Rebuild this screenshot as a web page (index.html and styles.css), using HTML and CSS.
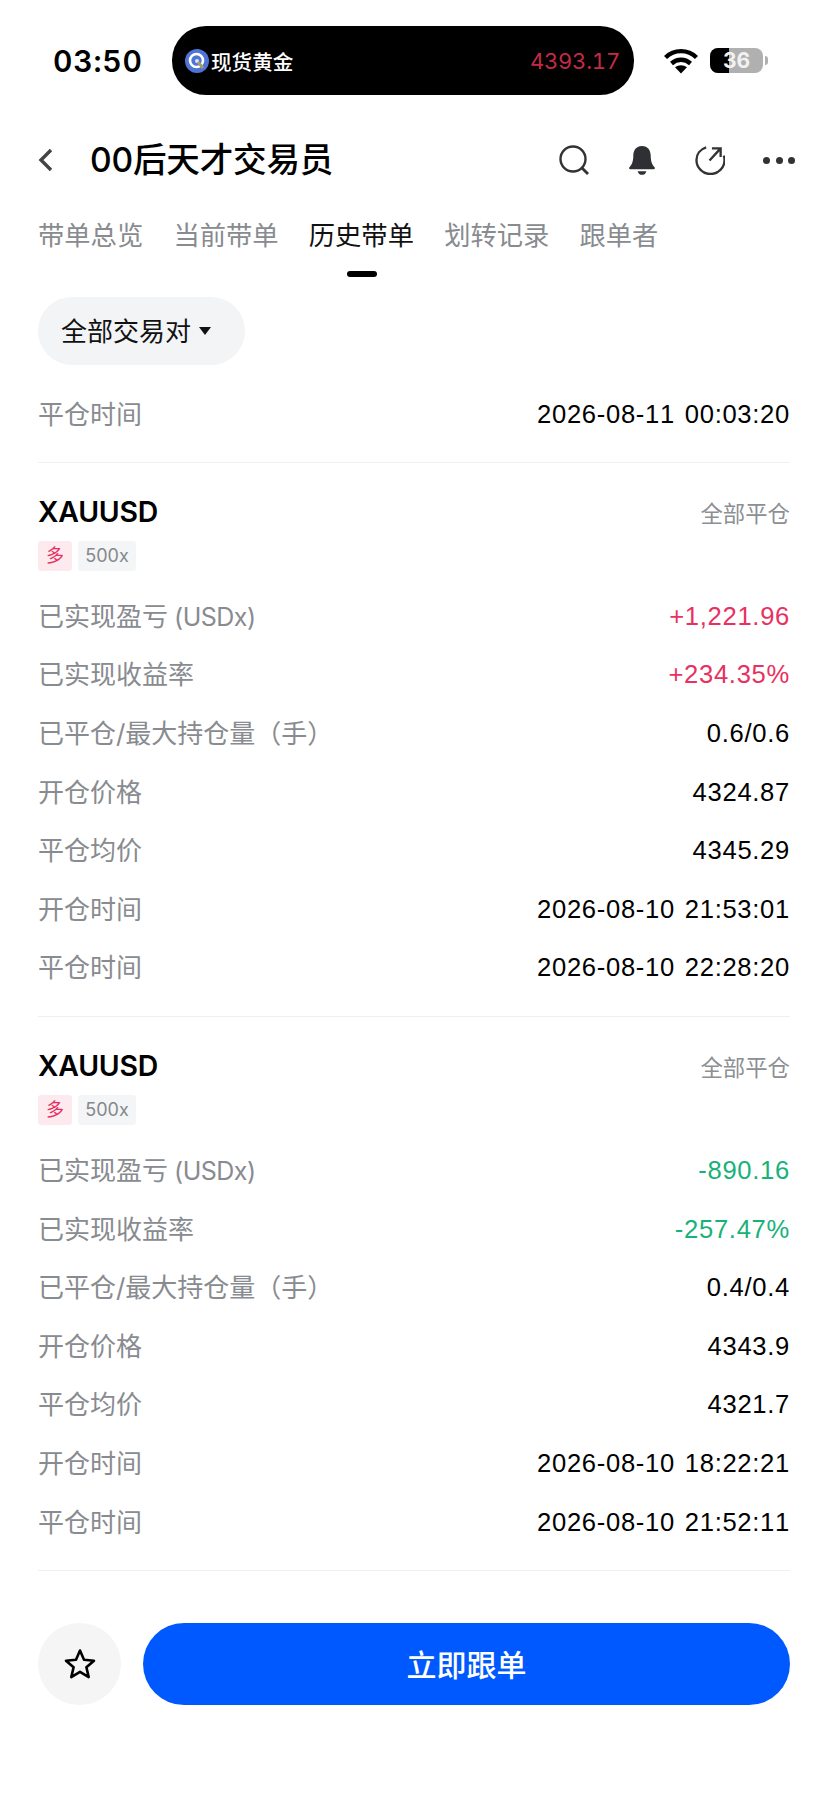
FILE: index.html
```html
<!DOCTYPE html>
<html lang="zh">
<head>
<meta charset="utf-8">
<title>历史带单</title>
<link rel="stylesheet" href="styles.css">
</head>
<body>
<div class="page">
  <header class="status">
    <span class="clock">03:50</span>
    <div class="island">
      <svg class="island-logo" viewBox="0 0 24 24"><circle cx="12" cy="12" r="12" fill="#4f74d8"/><circle cx="11.5" cy="11.5" r="6.5" fill="none" stroke="#fff" stroke-width="2.6"/><circle cx="12" cy="12" r="2" fill="#dfe6fa"/><path d="M13 13l5 6" stroke="#a89a6c" stroke-width="3"/></svg>
      <span class="island-name">现货黄金</span>
      <span class="island-price">4393.17</span>
    </div>
    <div class="status-right">
      <svg class="wifi" viewBox="0 0 34 26"><path d="M1.5 9.5C10 1 24 1 32.5 9.5" fill="none" stroke="#000" stroke-width="4.4"/><path d="M7.5 15.5c5.5-5 13.500-5 19 0" fill="none" stroke="#000" stroke-width="4.400"/><path d="M17 25.500l-6-6.200c3.500-2.800 8.500-2.800 12 0z" fill="#000"/></svg>
      <div class="battery"><span class="battery-level"></span><span class="battery-text">36</span></div>
      <span class="battery-cap"></span>
    </div>
  </header>

  <nav class="titlebar">
    <svg class="back" viewBox="0 0 18 26"><path d="M14 3L4 13l10 10" fill="none" stroke="#444" stroke-width="3.400"/></svg>
    <h1 class="title">00后天才交易员</h1>
    <div class="actions">
      <svg class="action" viewBox="0 0 30 30"><circle cx="14" cy="14" r="12.500" fill="none" stroke="#333" stroke-width="2.400"/><path d="M23 23l6 6" stroke="#333" stroke-width="2.800"/></svg>
      <svg class="action" viewBox="1.500 0 29 31"><path d="M16 1c-6 0-9 4.500-9 10 0 6-1.500 9-4 12-.8 1-.3 2 1 2h24c1.300 0 1.800-1 1-2-2.500-3-4-6-4-12 0-5.500-3-10-9-10z" fill="#2f3033"/><path d="M11.500 27h9c-.5 2.500-2.300 3.800-4.500 3.800s-4-1.300-4.500-3.800z" fill="#2f3033"/></svg>
      <svg class="action" viewBox="0 1 31 31"><path d="M11.500 3.500C5.500 5.500 1.500 10.500 1.500 16.500c0 8 6.500 14.500 14.500 14.500s14.500-6.500 14.500-14.500c0-1.500-.2-3-.7-4.500" fill="none" stroke="#333" stroke-width="2.400"/><path d="M15 17L26 5M17.500 4.500h9v9" fill="none" stroke="#333" stroke-width="2.400"/></svg>
      <div class="more"><i></i><i></i><i></i></div>
    </div>
  </nav>

  <div class="tabs">
    <span class="tab">带单总览</span>
    <span class="tab">当前带单</span>
    <span class="tab tab-active">历史带单</span>
    <span class="tab">划转记录</span>
    <span class="tab">跟单者</span>
  </div>

  <div class="filter"><span>全部交易对</span><span class="caret"></span></div>

  <section class="card card-head">
    <div class="row"><span class="label">平仓时间</span><span class="value">2026-08-11 00:03:20</span></div>
  </section>

  <section class="card">
    <div class="card-title"><span class="symbol">XAUUSD</span><span class="close-type">全部平仓</span></div>
    <div class="tags"><span class="tag tag-long">多</span><span class="tag tag-lev">500x</span></div>
    <div class="rows">
      <div class="row"><span class="label">已实现盈亏<span class="unit">(USDx)</span></span><span class="value up">+1,221.96</span></div>
      <div class="row"><span class="label">已实现收益率</span><span class="value up">+234.35%</span></div>
      <div class="row"><span class="label">已平仓/最大持仓量（手）</span><span class="value">0.6/0.6</span></div>
      <div class="row"><span class="label">开仓价格</span><span class="value">4324.87</span></div>
      <div class="row"><span class="label">平仓均价</span><span class="value">4345.29</span></div>
      <div class="row"><span class="label">开仓时间</span><span class="value">2026-08-10 21:53:01</span></div>
      <div class="row"><span class="label">平仓时间</span><span class="value">2026-08-10 22:28:20</span></div>
    </div>
  </section>

  <section class="card">
    <div class="card-title"><span class="symbol">XAUUSD</span><span class="close-type">全部平仓</span></div>
    <div class="tags"><span class="tag tag-long">多</span><span class="tag tag-lev">500x</span></div>
    <div class="rows">
      <div class="row"><span class="label">已实现盈亏<span class="unit">(USDx)</span></span><span class="value down">-890.16</span></div>
      <div class="row"><span class="label">已实现收益率</span><span class="value down">-257.47%</span></div>
      <div class="row"><span class="label">已平仓/最大持仓量（手）</span><span class="value">0.4/0.4</span></div>
      <div class="row"><span class="label">开仓价格</span><span class="value">4343.9</span></div>
      <div class="row"><span class="label">平仓均价</span><span class="value">4321.7</span></div>
      <div class="row"><span class="label">开仓时间</span><span class="value">2026-08-10 18:22:21</span></div>
      <div class="row"><span class="label">平仓时间</span><span class="value">2026-08-10 21:52:11</span></div>
    </div>
  </section>

  <footer class="footer">
    <div class="fav"><svg class="star" viewBox="0 0 32 32"><path d="M16 2.500l4 9.300 10 .9-7.600 6.600 2.300 9.800L16 23.900l-8.700 5.200 2.300-9.800L2 12.700l10-.9z" fill="none" stroke="#000" stroke-width="2.600" stroke-linejoin="round"/></svg></div>
    <button class="cta">立即跟单</button>
  </footer>
</div>
</body>
</html>
```
FILE: styles.css
```css
* { box-sizing: border-box; }
html, body { margin: 0; padding: 0; background: #fff; }
body { font-family: Inter, "Noto Sans CJK SC", sans-serif; color: #000; }
.page { width: 828px; height: 1800px; overflow: hidden; display: flex; flex-direction: column; }

.status { height: 122px; padding: 26px 0 0 53px; display: flex; align-items: flex-start; }
.clock { width: 119px; height: 70px; line-height: 70px; font-size: 30px; font-weight: 600; letter-spacing: .8px; font-variant-numeric: tabular-nums; }
.island { width: 462px; height: 69px; background: #000; border-radius: 34px; display: flex; align-items: center; padding: 0 14px 0 13px; }
.island-logo { width: 24px; height: 24px; flex: none; }
.island-name { margin-left: 2px; font-size: 20.6px; font-weight: 500; color: #fff; }
.island-price { margin-left: auto; font-size: 22px; font-weight: 400; letter-spacing: -.2px; font-variant-numeric: tabular-nums; color: #c42a48; }
.status-right { margin-left: 30px; height: 69px; display: flex; align-items: center; }
.wifi { width: 34px; height: 26px; }
.battery { position: relative; margin-left: 12px; width: 53px; height: 25px; border-radius: 8px; background: #b0b0b0; overflow: hidden; text-align: center; }
.battery-level { position: absolute; left: 0; top: 0; bottom: 0; width: 19px; background: #000; }
.battery-text { position: relative; display: block; line-height: 25px; font-size: 21px; font-weight: 700; color: #f2f2f2; }
.battery-cap { margin-left: 2px; width: 3px; height: 9px; border-radius: 0 3px 3px 0; background: #b0b0b0; }

.titlebar { height: 76px; padding: 0 33px 0 38px; display: flex; align-items: center; }
.back { width: 18px; height: 26px; margin-left: -1px; flex: none; }
.title { margin: 0 0 0 35px; font-size: 33.6px; font-weight: 500; line-height: 44px; letter-spacing: -.2px; }
.actions { margin-left: auto; display: flex; align-items: center; gap: 38px; }
.action { width: 30px; height: 30px; }
.more { display: flex; gap: 5.5px; }
.more i { width: 7px; height: 7px; border-radius: 50%; background: #333; }

.tabs { margin-top: 12px; height: 75px; padding-left: 38px; display: flex; align-items: flex-start; gap: 30.2px; }
.tab { position: relative; font-size: 26.3px; line-height: 52px; color: #888b8f; }
.tab-active { color: #111; }
.tab-active::after { content: ""; position: absolute; left: 38px; top: 61px; width: 30px; height: 6px; border-radius: 3px; background: #000; }

.filter { margin: 12px 0 0 38px; width: 207px; height: 68px; border-radius: 34px; background: #f3f4f6; display: flex; align-items: center; padding: 0 0 4px 23px; font-size: 26px; color: #111; }
.caret { margin: 4px 0 0 8px; width: 0; height: 0; border: 6px solid transparent; border-top: 8px solid #111; border-bottom: 0; }

.card { margin: 0 38px; border-bottom: 1px solid #f0f0f2; }
.card-head { padding: 27px 0 30px; }
.card-title { padding-top: 25px; height: 72px; display: flex; justify-content: space-between; align-items: center; }
.symbol { font-size: 28.4px; font-weight: 600; letter-spacing: -.2px; }
.close-type { font-size: 22.4px; color: #8c8f93; }
.tags { margin-top: 6px; display: flex; gap: 6px; }
.tag { height: 30px; line-height: 30px; border-radius: 3px; text-align: center; font-size: 18px; }
.tag-long { width: 34px; background: #fdeaef; color: #e5305f; }
.tag-lev { width: 58px; background: #f4f5f6; color: #85888c; }
.rows { padding: 14px 0 21px; }
.row { height: 58.6px; display: flex; justify-content: space-between; align-items: center; }
.card-head .row { height: 40px; }
.label { font-size: 26px; color: #888b8f; }
.unit { margin-left: 6px; font-size: 25px; letter-spacing: -.5px; }
.value { padding-top: 4px; font-family: "Liberation Sans", "Noto Sans CJK SC", sans-serif; font-size: 25.6px; color: #000; letter-spacing: .7px; word-spacing: 2px; font-kerning: none; }
.up { color: #e8315f; }
.down { color: #17b27a; }

.footer { margin-top: auto; padding: 0 38px 95px; display: flex; gap: 22px; }
.fav { width: 83px; height: 82px; border-radius: 50%; background: #f5f5f5; display: flex; align-items: center; justify-content: center; }
.star { width: 32px; height: 32px; }
.cta { flex: 1; height: 82px; padding: 0 0 3px; border: 0; border-radius: 41px; background: #0059ff; color: #fff; font: 500 30px Inter, "Noto Sans CJK SC", sans-serif; }
```
